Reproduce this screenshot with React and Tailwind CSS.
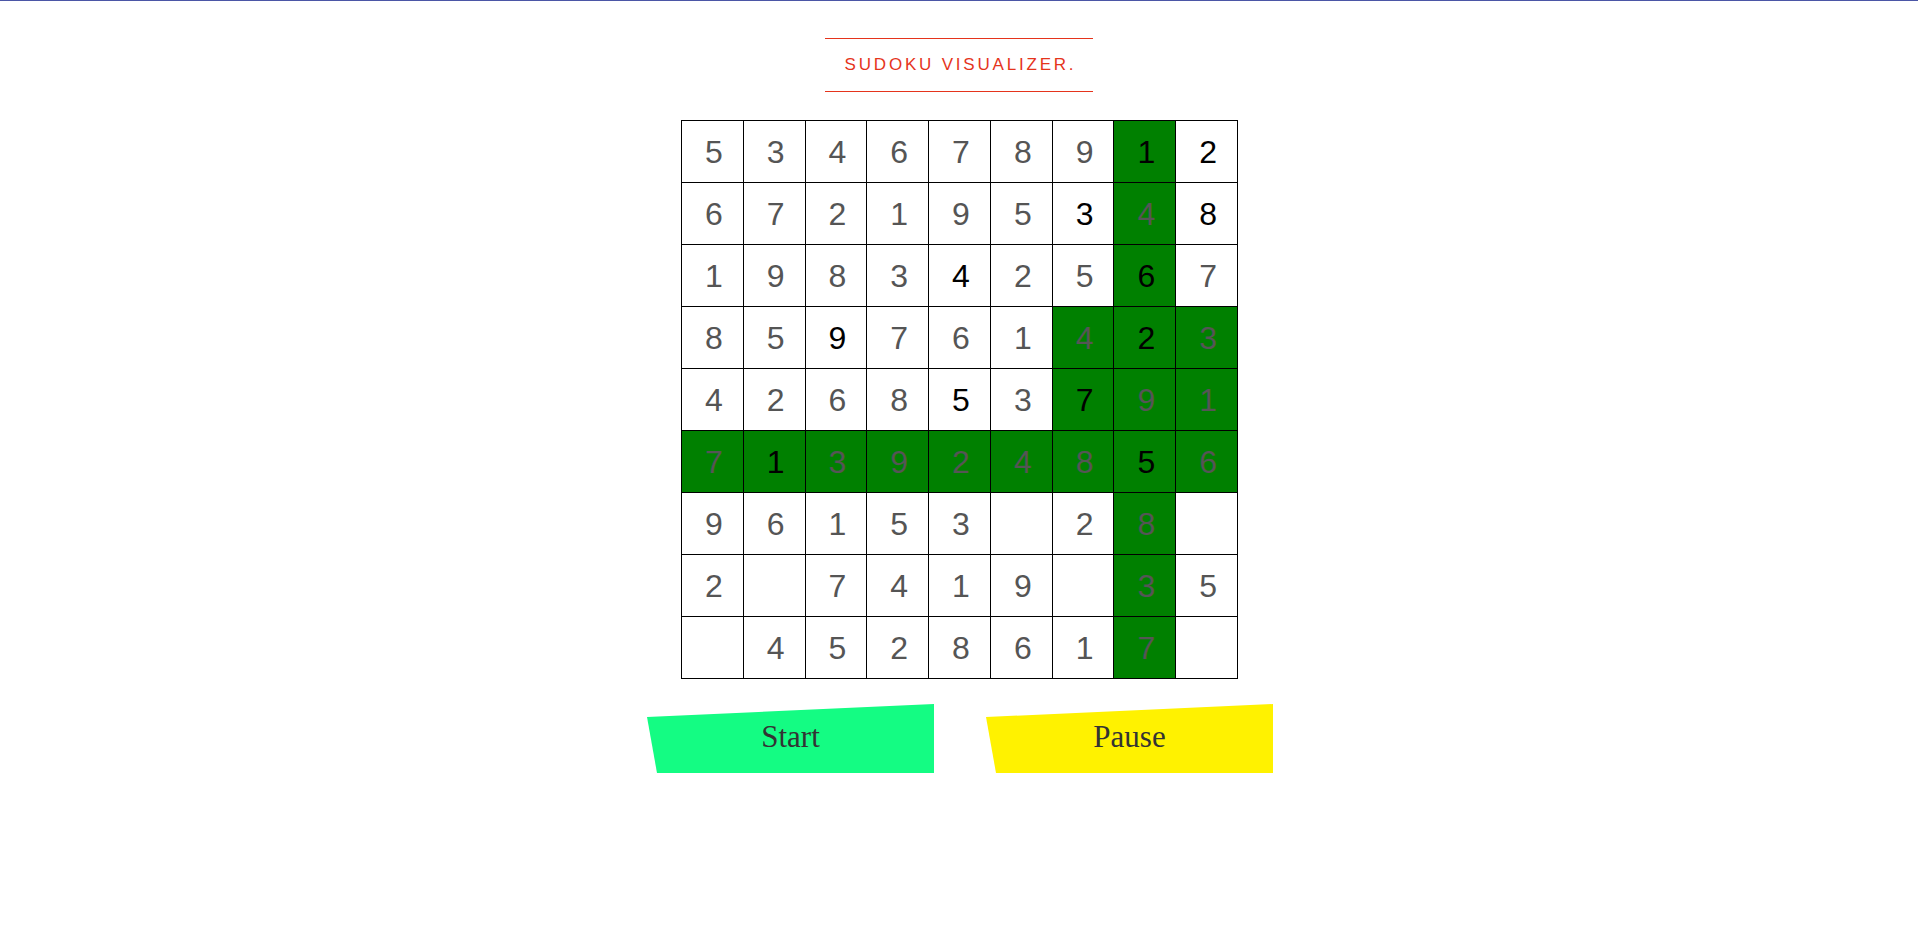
const board = [
  ["5g", "3g", "4g", "6g", "7g", "8g", "9g", "1b*", "2b"],
  ["6g", "7g", "2g", "1g", "9g", "5g", "3b", "4g*", "8b"],
  ["1g", "9g", "8g", "3g", "4b", "2g", "5g", "6b*", "7g"],
  ["8g", "5g", "9b", "7g", "6g", "1g", "4g*", "2b*", "3g*"],
  ["4g", "2g", "6g", "8g", "5b", "3g", "7b*", "9g*", "1g*"],
  ["7g*", "1b*", "3g*", "9g*", "2g*", "4g*", "8g*", "5b*", "6g*"],
  ["9g", "6g", "1g", "5g", "3g", "", "2g", "8g*", ""],
  ["2g", "", "7g", "4g", "1g", "9g", "", "3g*", "5g"],
  ["", "4g", "5g", "2g", "8g", "6g", "1g", "7g*", ""],
];

function Cell({ value }) {
  // value: digit + color flag (g = given/gray, b = solved/black) + "*" when highlighted
  const digit = value ? value[0] : "";
  const solved = value.includes("b");
  const active = value.includes("*");
  return (
    <div
      className={`h-[61px] flex items-center justify-center pl-[3px] text-[32px] ${
        active ? "bg-[#008000]" : "bg-white"
      } ${solved ? "text-black" : "text-[#555555]"}`}
    >
      {digit}
    </div>
  );
}

export default function App() {
  return (
    <div className="min-h-screen bg-white border-t border-[#4b56a6] font-['Liberation_Sans',Arial,sans-serif]">
      <div className="flex flex-col items-center pt-[37px]">
        <div className="w-[268px] h-[54px] border-y border-[#e5341c] flex items-center justify-center">
          <h1 className="text-[17px] tracking-[2.8px] text-[#e5341c] pl-[3px]">SUDOKU VISUALIZER.</h1>
        </div>

        <div className="mt-[28px] ml-[1px] grid grid-cols-[repeat(9,60.8px)] gap-px bg-black p-px">
          {board.map((row, r) =>
            row.map((v, c) => <Cell key={`${r}-${c}`} value={v} />)
          )}
        </div>

        <div className="mt-[25px] ml-[2px] flex gap-[52px] font-['Liberation_Serif','Times_New_Roman',serif]">
          <button className="w-[287px] h-[69px] bg-[#14fc83] text-[#333333] text-[31px] [clip-path:polygon(0_13px,100%_0,100%_100%,10px_100%)] flex items-center justify-center pb-[2px]">
            Start
          </button>
          <button className="w-[287px] h-[69px] bg-[#fff200] text-[#333333] text-[31px] [clip-path:polygon(0_13px,100%_0,100%_100%,10px_100%)] flex items-center justify-center pb-[2px]">
            Pause
          </button>
        </div>
      </div>
    </div>
  );
}
